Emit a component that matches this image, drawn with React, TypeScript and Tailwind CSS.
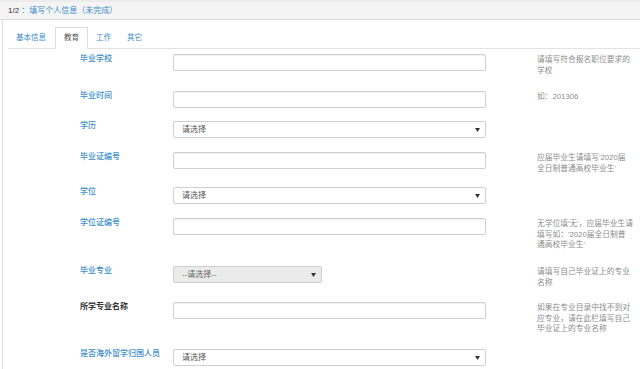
const font = "font-['Liberation_Sans','Noto_Sans_CJK_SC',sans-serif]";

type Row = {
  label: string;
  kind: "input" | "select" | "selectGray";
  h: string;
  help?: string[];
  dark?: boolean;
};

const rows: Row[] = [
  { label: "毕业学校", kind: "input", h: "h-[37px]", help: ["请填写符合报名职位要求的", "学校"] },
  { label: "毕业时间", kind: "input", h: "h-[30px]", help: ["如：201306"] },
  { label: "学历", kind: "select", h: "h-[31px]" },
  { label: "毕业证编号", kind: "input", h: "h-[35px]", help: ["应届毕业生请填写'2020届", "全日制普通高校毕业生'"] },
  { label: "学位", kind: "select", h: "h-[31px]" },
  {
    label: "学位证编号",
    kind: "input",
    h: "h-[48px]",
    help: ["无学位填'无'，应届毕业生请", "填写如：'2020届全日制普", "通高校毕业生'"],
  },
  { label: "毕业专业", kind: "selectGray", h: "h-[36px]", help: ["请填写自己毕业证上的专业", "名称"] },
  {
    label: "所学专业名称",
    kind: "input",
    h: "h-[47px]",
    dark: true,
    help: ["如果在专业目录中找不到对", "应专业，请在此栏填写自己", "毕业证上的专业名称"],
  },
  { label: "是否海外留学归国人员", kind: "select", h: "h-[30px]" },
];

function Arrow() {
  return (
    <svg width="5" height="4" viewBox="0 0 5 4" className="shrink-0">
      <path d="M0 0 L5 0 L2.5 4 Z" fill="#333" />
    </svg>
  );
}

function Field({ kind }: { kind: Row["kind"] }) {
  if (kind === "input") {
    return (
      <div className="w-[313px] h-[17px] border border-[#cfcfcf] rounded-[2px] bg-white shadow-[inset_0_1px_1px_rgba(0,0,0,0.06)]" />
    );
  }
  if (kind === "selectGray") {
    return (
      <div className="w-[149px] h-[17px] border border-[#cfcfcf] rounded-[2px] bg-[#ebebeb] flex items-center justify-between pl-[8px] pr-[5px]">
        <span className="text-[8px] text-[#666]">--请选择--</span>
        <Arrow />
      </div>
    );
  }
  return (
    <div className="w-[313px] h-[17px] border border-[#cfcfcf] rounded-[2px] bg-white flex items-center justify-between pl-[8px] pr-[5px]">
      <span className="text-[8px] text-[#555]">请选择</span>
      <Arrow />
    </div>
  );
}

export default function App() {
  return (
    <div className={`w-[640px] h-[369px] overflow-hidden bg-white ${font}`}>
      <div className="h-[20px] bg-[#f4f4f4] border-t-2 border-t-[#ececec] border-b border-b-[#dedede] flex items-center pl-[8px] text-[8px]">
        <span className="text-[#333] font-medium">1/2</span>
        <span className="text-[#3c8dca]">&nbsp;：填写个人信息（未完成）</span>
      </div>
      <div className="ml-[2px] border-l border-[#dcdcdc] h-[349px] pl-[5px]">
        <div className="pt-[7px] flex border-b border-[#e2e2e2] text-[7.5px]">
          <div className="h-[21px] px-[8px] flex items-center text-[#3c8dca]">基本信息</div>
          <div className="h-[22px] -mb-px ml-px px-[8px] flex items-center text-[#555] bg-white border border-[#dcdcdc] border-b-white">
            教育
          </div>
          <div className="h-[21px] px-[8px] flex items-center text-[#3c8dca]">工作</div>
          <div className="h-[21px] px-[8px] flex items-center text-[#3c8dca]">其它</div>
        </div>
        <div className="pt-[5px] -ml-[5px]">
          {rows.map((r) => (
            <div key={r.label} className={`flex items-start pl-[77px] ${r.h}`}>
              <div
                className={`w-[93px] text-[8px] leading-[10px] font-medium whitespace-nowrap ${
                  r.dark ? "text-[#333] font-semibold" : "text-[#3c8dca]"
                }`}
              >
                {r.label}
              </div>
              <Field kind={r.kind} />
              {r.help && (
                <div
                  className={`mt-[1px] text-[7.75px] leading-[10.5px] text-[#8c8c8c] whitespace-nowrap ${
                    r.kind === "selectGray" ? "ml-[215px]" : "ml-[51px]"
                  }`}
                >
                  {r.help.map((l, i) => (
                    <div key={i}>{l}</div>
                  ))}
                </div>
              )}
            </div>
          ))}
        </div>
      </div>
    </div>
  );
}
